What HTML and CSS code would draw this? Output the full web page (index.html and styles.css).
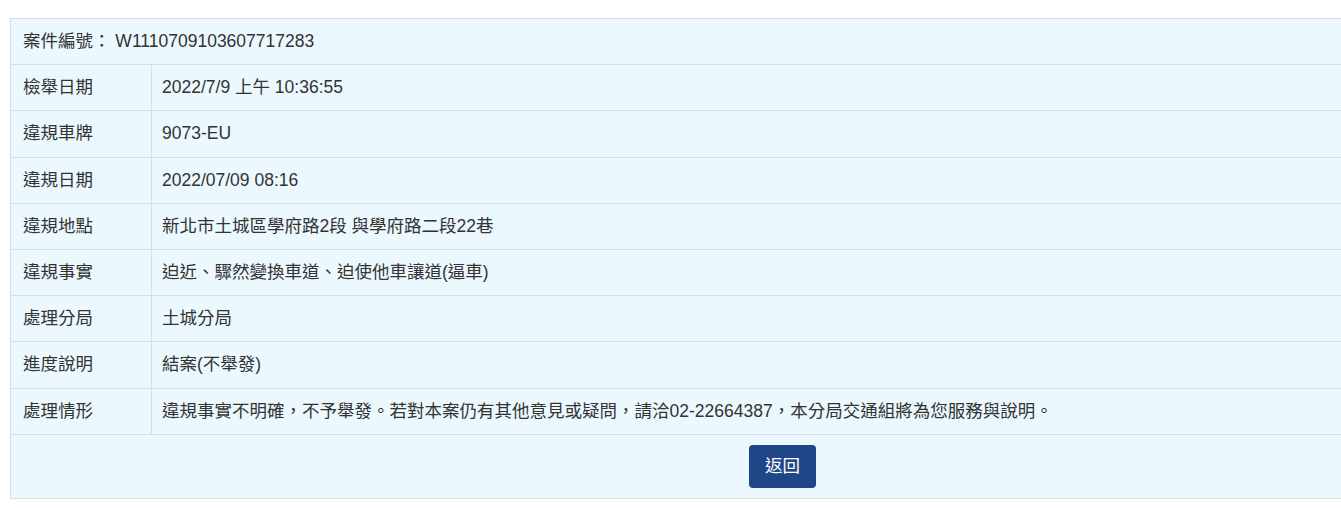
FILE: index.html
```html
<!DOCTYPE html>
<html lang="zh-Hant">
<head>
<meta charset="utf-8">
<title>案件查詢</title>
<link rel="stylesheet" href="styles.css">
</head>
<body>
<div class="wrap">
<table class="case">
  <tr><td class="head" colspan="2">案件編號： W1110709103607717283</td></tr>
  <tr><td class="label">檢舉日期</td><td class="value">2022/7/9 上午 10:36:55</td></tr>
  <tr><td class="label">違規車牌</td><td class="value">9073-EU</td></tr>
  <tr><td class="label">違規日期</td><td class="value">2022/07/09 08:16</td></tr>
  <tr><td class="label">違規地點</td><td class="value">新北市土城區學府路2段 與學府路二段22巷</td></tr>
  <tr><td class="label">違規事實</td><td class="value">迫近、驟然變換車道、迫使他車讓道(逼車)</td></tr>
  <tr><td class="label">處理分局</td><td class="value">土城分局</td></tr>
  <tr><td class="label">進度說明</td><td class="value">結案(不舉發)</td></tr>
  <tr><td class="label">處理情形</td><td class="value">違規事實不明確，不予舉發。若對本案仍有其他意見或疑問，請洽02-22664387，本分局交通組將為您服務與說明。</td></tr>
  <tr><td class="actions" colspan="2"><button class="btn" type="button">返回</button></td></tr>
</table>
</div>
</body>
</html>
```

FILE: styles.css
```css
html, body {
  margin: 0;
  padding: 0;
  background: #ffffff;
  overflow: hidden;
}
.wrap {
  padding: 18px 0 0 10px;
}
.case {
  width: 1545px;
  border-collapse: collapse;
  border: 1px solid #d6dee3;
  background: #ebf8fe;
  font-family: "Liberation Sans", "Noto Sans CJK TC", sans-serif;
  font-size: 17.5px;
  color: #333333;
}
.case td {
  border-top: 1px solid #d6dee3;
  padding: 12px 12px;
  line-height: 21.2px;
  text-align: left;
  vertical-align: middle;
}
.case td.label {
  width: 116px;
  border-right: 1px solid #d6dee3;
}
.case td.value {
  padding-left: 10px;
}
.case td.actions {
  text-align: center;
  padding: 10px 12px 10px;
}
.btn {
  font-family: "Liberation Sans", "Noto Sans CJK TC", sans-serif;
  font-size: 17.5px;
  line-height: 25px;
  color: #ffffff;
  background: #1f4788;
  border: none;
  border-radius: 4px;
  padding: 9px 16px;
  cursor: pointer;
}
```
